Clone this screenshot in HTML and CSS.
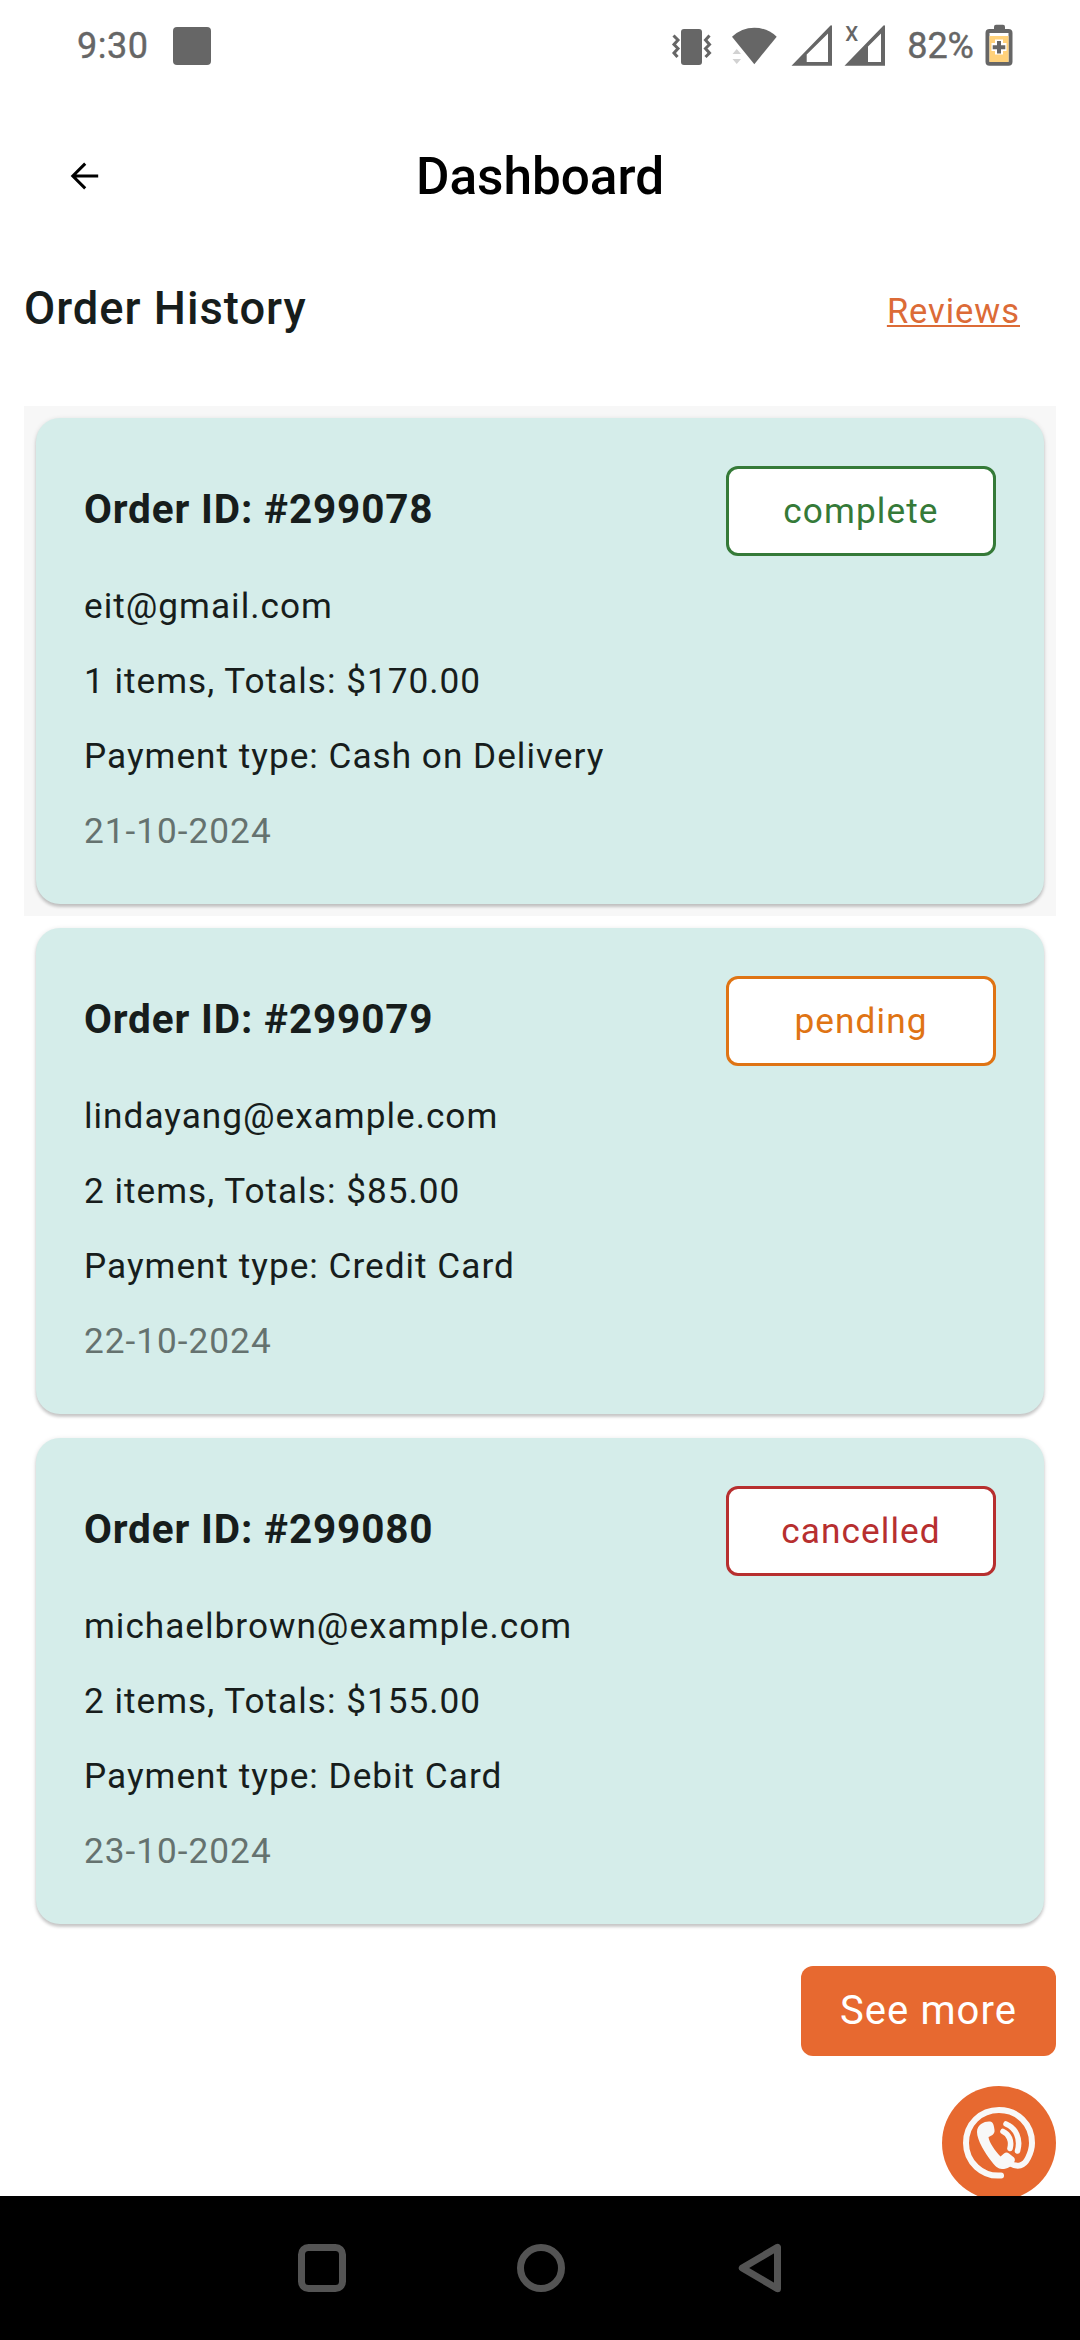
FILE: index.html
```
<!DOCTYPE html>
<html lang="en">
<head>
<meta charset="utf-8">
<title>Dashboard</title>
<link rel="stylesheet" href="styles.css">
</head>
<body>
<div class="screen">
  <div class="status">
    <div class="status-left">
      <span class="clock">9:30</span>
      <span class="notice"></span>
    </div>
    <div class="status-right">
      <svg width="42" height="44" viewBox="671 24 42 44" fill="#666">
        <rect x="681" y="29" width="21" height="36" rx="3"/>
        <path d="M673.5 35.5 L678 40 L674 44.5 L678 48.5 L674 53 L677.5 57 M709.5 35.5 L705.5 40 L709.5 44.5 L705.5 48.5 L709.5 53 L705.5 57" fill="none" stroke="#666" stroke-width="3"/>
      </svg>
      <svg class="wifi" width="46" height="44" viewBox="731 24 46 44">
        <path d="M754.3 64.3 L732 36.7 Q741.5 27.7 754.3 27.7 Q767 27.7 776.7 36.7 Z" fill="#666"/>
        <path d="M732.5 54 h8.5 l-4.25 -5 z M732.5 59 h8.5 l-4.25 5 z" fill="#d2d2d2"/>
      </svg>
      <svg class="signal" width="42" height="44" viewBox="791 24 42 44">
        <path fill="#666" fill-rule="evenodd" d="M791.5 65.7 L830.5 25.5 Q832 24.5 832 26.5 V65.7 Z M806.7 54.5 V62 H828 V33.5 Z"/>
      </svg>
      <svg class="signal-x" width="42" height="44" viewBox="844 24 42 44">
        <path fill="#666" fill-rule="evenodd" d="M844.5 65.7 L883.5 25.5 Q885 24.5 885 26.5 V65.7 Z M868 46.5 V62 H881 V33.5 Z"/>
        <text class="sim-x" x="845.3" y="40.7">X</text>
      </svg>
      <span class="percent">82%</span>
      <svg class="battery" width="28" height="44" viewBox="984.5 24 28 44">
        <rect x="993.5" y="24.7" width="11" height="8" rx="2" fill="#666"/>
        <rect x="987" y="31" width="23" height="32.7" rx="2" fill="#fff" stroke="#666" stroke-width="4"/>
        <rect x="989" y="36" width="19" height="26" fill="#ffd17a"/>
        <path d="M998.5 39.5 V54.5 M991 47 H1006" stroke="#fff" stroke-width="8"/>
        <path d="M998.5 41 V53.5 M992.2 47.2 H1004.8" stroke="#666" stroke-width="4"/>
      </svg>
    </div>
  </div>

  <header class="appbar">
    <svg class="back" width="32" height="32" viewBox="0 0 32 32" fill="none" stroke="#000" stroke-width="3">
      <path d="M30.2 16 H5 M17.2 3.6 L4.8 16 L17.2 28.4"/>
    </svg>
    <h1 class="title">Dashboard</h1>
  </header>

  <div class="section-head">
    <h2 class="section-title">Order History</h2>
    <a class="reviews">Reviews</a>
  </div>

  <main class="orders">
    <div class="item item-active">
      <article class="card">
        <div class="card-head">
          <h3 class="order-id">Order ID: #299078</h3>
          <span class="badge complete">complete</span>
        </div>
        <p class="line">eit@gmail.com</p>
        <p class="line">1 items, Totals: $170.00</p>
        <p class="line">Payment type: Cash on Delivery</p>
        <p class="line date">21-10-2024</p>
      </article>
    </div>
    <div class="item">
      <article class="card">
        <div class="card-head">
          <h3 class="order-id">Order ID: #299079</h3>
          <span class="badge pending">pending</span>
        </div>
        <p class="line">lindayang@example.com</p>
        <p class="line">2 items, Totals: $85.00</p>
        <p class="line">Payment type: Credit Card</p>
        <p class="line date">22-10-2024</p>
      </article>
    </div>
    <div class="item">
      <article class="card">
        <div class="card-head">
          <h3 class="order-id">Order ID: #299080</h3>
          <span class="badge cancelled">cancelled</span>
        </div>
        <p class="line">michaelbrown@example.com</p>
        <p class="line">2 items, Totals: $155.00</p>
        <p class="line">Payment type: Debit Card</p>
        <p class="line date">23-10-2024</p>
      </article>
    </div>
  </main>

  <div class="actions">
    <button class="more">See more</button>
    <button class="call" aria-label="Call">
      <svg width="114" height="114" viewBox="0 0 114 114" fill="none" stroke="#f8f8f8" stroke-linecap="round" stroke-linejoin="round">
        <path stroke-width="6" d="M59 89.5 C40 91 24 76 24 57 C24 38 38.5 24 57 24 C75.5 24 90 38 90 57 C90 62 88.5 67 86 72 C82 80 76 82 67 77"/>
        <path fill="#f8f8f8" stroke="none" d="M35 46 C35 38 43 35 48 35.5 C51 36 52 39 52.5 44 C53 48 50 49.5 46.5 51 C47 56 53 65 58.500 70.5 L62 67.5 Q64.5 65.5 67 67.5 L72 71.5 Q74 74 71.5 77 C69 80.5 66 83 60 83 C56 83 53 80 50 76 C43 67 35 54 35 46 Z"/>
        <path stroke-width="5.6" d="M61 45.5 C67 48 70 55 68 62.5 M64 38 C74 42 79 53 75.5 65"/>
      </svg>
    </button>
  </div>

  <nav class="navbar">
    <svg width="48" height="48" viewBox="0 0 48 48"><rect x="3.5" y="3.5" width="41" height="41" rx="7" fill="none" stroke="#545454" stroke-width="7"/></svg>
    <svg width="48" height="48" viewBox="0 0 48 48"><circle cx="24" cy="24" r="20.5" fill="none" stroke="#545454" stroke-width="7"/></svg>
    <svg width="48" height="48" viewBox="0 0 48 48"><path d="M6.3 24 L41.5 3.3 V44.7 Z" fill="none" stroke="#545454" stroke-width="7" stroke-linejoin="round"/></svg>
  </nav>
</div>
</body>
</html>
```
FILE: styles.css
```
* { box-sizing: border-box; }
body { margin: 0; background: #fff; font-family: Roboto, sans-serif; color: #171d1c; }
h1, h2, h3, p { margin: 0; }
button { border: 0; padding: 0; font-family: inherit; }
svg { display: block; flex: none; overflow: visible; }

.screen { width: 1080px; height: 2340px; display: flex; flex-direction: column; overflow: hidden; background: #fff; }

.status { height: 92px; padding: 0 67px 0 77px; display: flex; justify-content: space-between; align-items: center; color: #666; font-size: 36px; line-height: 42px; }
.status-left, .status-right { display: flex; align-items: center; }
.clock { letter-spacing: 0.5px; -webkit-text-stroke: 0.4px #666; }
.notice { width: 38px; height: 38px; margin-left: 25px; border-radius: 4px; background: #666; }
.wifi { margin-left: 18px; }
.signal { margin-left: 14px; }
.signal-x { margin-left: 11px; }
.sim-x { font-size: 20.5px; font-weight: 500; fill: #666; }
.percent { margin-left: 21px; -webkit-text-stroke: 0.4px #666; }
.battery { margin-left: 11px; }

.appbar { height: 168px; padding: 0 68px; display: grid; grid-template-columns: 32px 1fr 32px; align-items: center; }
.title { padding-top: 1px; font-size: 51.3px; font-weight: 500; line-height: 60px; text-align: center; color: #000; }

.section-head { height: 146px; padding: 19px 60px 0 24px; display: flex; justify-content: space-between; align-items: flex-start; }
.section-title { font-size: 45.3px; font-weight: 500; line-height: 60px; letter-spacing: 1px; }
.reviews { padding-top: 2px; font-size: 34.5px; line-height: 60px; letter-spacing: 0.95px; color: #dc6b37; text-decoration: underline; text-decoration-thickness: 2px; text-underline-offset: 2px; text-decoration-skip-ink: none; }

.orders { padding: 0 24px; }
.item { padding: 12px; }
.item-active { background: #f7f7f7; }
.card { height: 486px; padding: 48px; border-radius: 24px; background: #d5edea; box-shadow: 0 3px 3px rgba(0,0,0,.16), 0 1px 5px rgba(0,0,0,.12); }
.card-head { height: 90px; display: flex; justify-content: space-between; align-items: center; }
.order-id { padding-bottom: 3px; font-size: 40.5px; font-weight: 700; line-height: 47px; letter-spacing: 0.85px; }
.badge { width: 270px; height: 90px; padding-top: 1px; border: 3px solid; border-radius: 12px; background: #fff; display: flex; justify-content: center; align-items: center; font-size: 35.2px; line-height: 41px; letter-spacing: 1.1px; }
.complete { color: #357a38; }
.pending { color: #df7414; }
.cancelled { color: #b72f2f; }
.line { margin-top: 26px; font-size: 35.2px; line-height: 49px; letter-spacing: 1px; white-space: nowrap; }
.date { color: #65726f; }

.actions { flex: 1; min-height: 0; overflow: hidden; padding: 30px 24px 0; display: flex; flex-direction: column; align-items: flex-end; gap: 30px; }
.more { flex: none; width: 255px; height: 90px; padding-bottom: 1px; border-radius: 12px; background: #e76930; color: #fff; font-size: 40px; line-height: 47px; letter-spacing: 1.1px; }
.call { flex: none; width: 114px; height: 114px; border-radius: 50%; background: #e76930; }

.navbar { flex: none; height: 144px; padding: 0 296px 0 298px; display: flex; justify-content: space-between; align-items: center; background: #000; }
```
